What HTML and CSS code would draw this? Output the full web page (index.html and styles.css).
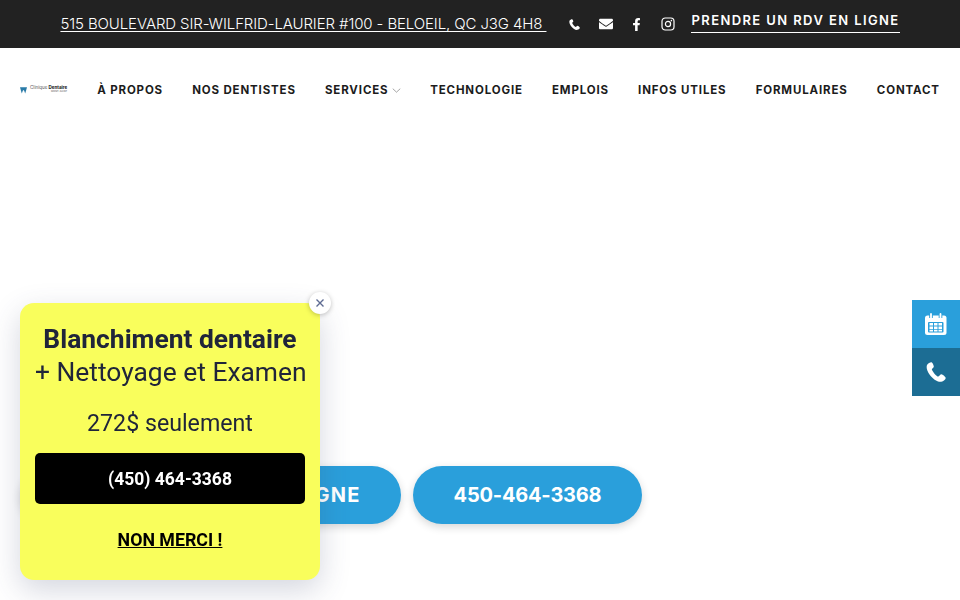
FILE: index.html
```html
<!doctype html>
<html>
    <head>
        <meta charset="utf-8">
        <title>Clinique Dentaire</title>
        <link rel="stylesheet" href="styles.css">
    </head>
    <body>
        <div class="topbar">
            <a class="address" href="#">515 BOULEVARD SIR-WILFRID-LAURIER #100 - BELOEIL, QC J3G 4H8&nbsp;</a>
            <div class="social">
                <a href="#"><svg class="icon-phone" viewBox="0 0 512 512"><path d="M150 10 C120 -5 60 30 30 70 C0 120 20 220 90 320 C170 430 290 520 390 505 C450 495 500 450 505 410 C505 385 430 320 395 315 C365 312 345 370 315 372 C270 370 170 250 150 190 C145 165 195 150 200 120 C200 90 175 25 150 10z"/></svg></a>
                <a href="#"><svg class="icon-mail" viewBox="0 0 512 512"><path d="M502.3 190.8c3.9-3.1 9.7-.2 9.7 4.7V400c0 26.5-21.5 48-48 48H48c-26.5 0-48-21.5-48-48V195.6c0-5 5.7-7.8 9.7-4.7 22.4 17.4 52.1 39.5 154.1 113.6 21.1 15.4 56.7 47.8 92.2 47.6 35.7.3 72-32.8 92.3-47.6 102-74.1 131.6-96.3 154-113.7zM256 320c23.2.4 56.6-29.2 73.4-41.4 132.7-96.3 142.8-104.7 173.4-128.7 5.8-4.5 9.2-11.5 9.2-18.9v-19c0-26.5-21.5-48-48-48H48C21.5 64 0 85.5 0 112v19c0 7.4 3.4 14.3 9.2 18.9 30.6 23.9 40.7 32.4 173.4 128.7 16.8 12.2 50.2 41.8 73.4 41.4z"/></svg></a>
                <a href="#"><svg class="icon-fb" viewBox="0 0 320 512"><path d="M279.14 288l14.22-92.66h-88.91v-60.13c0-25.35 12.42-50.06 52.24-50.06h40.42V6.26S260.43 0 225.36 0c-73.22 0-121.08 44.38-121.08 124.72v70.62H22.89V288h81.39v224h100.17V288z"/></svg></a>
                <a href="#"><svg class="icon-insta" viewBox="0 0 14 14"><rect x="1" y="1" width="12" height="12" rx="3.2" fill="none" stroke="#fff" stroke-width="1.2"/><circle cx="7" cy="7" r="2.6" fill="none" stroke="#fff" stroke-width="1.2"/><circle cx="10.4" cy="3.6" r=".8" fill="#fff"/></svg></a>
            </div>
            <a class="rdv-link" href="#">PRENDRE UN RDV EN LIGNE</a>
        </div>

        <nav class="nav">
            <a class="logo" href="#">
                <svg class="logo-tooth" viewBox="0 0 10 10"><path d="M0 1h10L8.6 6 7.4 10 6 6 5 5 4 6 2.6 10 1.4 6z"/></svg>
                <span class="logo-text">Clinique <b>Dentaire</b><small>MONT-SAINT</small></span>
            </a>
            <a class="nav-item" href="#">À PROPOS</a>
            <a class="nav-item" href="#">NOS DENTISTES</a>
            <a class="nav-item" href="#">SERVICES <svg class="chevron" viewBox="0 0 10 6"><path d="M.5 .8 5 5 9.5 .8" fill="none" stroke="#777" stroke-width=".8"/></svg></a>
            <a class="nav-item" href="#">TECHNOLOGIE</a>
            <a class="nav-item" href="#">EMPLOIS</a>
            <a class="nav-item" href="#">INFOS UTILES</a>
            <a class="nav-item" href="#">FORMULAIRES</a>
            <a class="nav-item" href="#">CONTACT</a>
        </nav>

        <section class="hero">
            <a class="pill pill-wide" href="#">PRENDRE UN RDV EN LIGNE</a>
            <a class="pill pill-phone" href="#">450-464-3368</a>
        </section>

        <div class="side-tabs">
            <a class="tab tab-calendar" href="#">
                <svg class="icon-calendar" viewBox="0 0 22 22">
                    <rect x="0" y="2.500" width="21.500" height="19.500" rx="2.500" fill="#fff"/>
                    <rect x="3" y="9" width="15.500" height="10.500" rx="1" fill="#2a9fdb"/>
                    <path fill="none" stroke="#2a9fdb" stroke-width="3.600" d="M6 .5v4.500M15.500 .5v4.500"/>
                    <path fill="none" stroke="#fff" stroke-width="1.800" stroke-linecap="round" d="M6 1v4M15.500 1v4"/>
                    <path fill="#fff" d="M4.500 10h3.500v2.500H4.500zM9 10h3.500v2.500H9zM13.500 10h3.500v2.500h-3.500zM4.500 13.500h3.500V16H4.500zM9 13.500h3.500V16H9zM13.500 13.500h3.500V16h-3.500zM4.500 16.800h3.500v1.700H4.500zM9 16.800h3.500v1.700H9zM13.500 16.800h3.500v1.700h-3.500z"/>
                </svg>
            </a>
            <a class="tab tab-phone" href="#">
                <svg class="icon-tab-phone" viewBox="0 0 512 512"><path d="M150 10 C120 -5 60 30 30 70 C0 120 20 220 90 320 C170 430 290 520 390 505 C450 495 500 450 505 410 C505 385 430 320 395 315 C365 312 345 370 315 372 C270 370 170 250 150 190 C145 165 195 150 200 120 C200 90 175 25 150 10z"/></svg>
            </a>
        </div>

        <div class="popup">
            <button class="popup-close">
                <svg viewBox="0 0 10 10"><path d="M1.500 1.500l7 7M8.500 1.500l-7 7" stroke="#5d6b92" stroke-width="1.400" fill="none"/></svg>
            </button>
            <h2 class="popup-title"><b>Blanchiment dentaire</b><br>+ Nettoyage et Examen</h2>
            <p class="popup-price">272$ seulement</p>
            <a class="popup-call" href="#">(450) 464-3368</a>
            <a class="popup-dismiss" href="#">NON MERCI !</a>
        </div>
    </body>
</html>
```

FILE: styles.css
```css
body {
    margin: 0;
    height: 600px;
    overflow: hidden;
    background: white;
    font-family: "Inter", "Liberation Sans", sans-serif;
}
a {
    color: inherit;
    text-decoration: none;
}

.topbar {
    display: flex;
    justify-content: center;
    align-items: center;
    height: 48px;
    background: #222222;
    color: white;
}
.address {
    margin-top: -1px;
    font-size: 15px;
    font-weight: 300;
    letter-spacing: -0.11px;
    text-decoration: underline;
    text-underline-offset: 2px;
}
.social {
    display: flex;
    align-items: center;
    margin-left: 13px;
    margin-right: 8px;
}
.social a {
    display: flex;
    justify-content: center;
    width: 31px;
}
.social svg {
    fill: white;
}
.icon-phone {
    width: 11px;
    height: 11px;
}
.icon-mail {
    width: 14px;
    height: 14px;
}
.icon-fb {
    width: 9px;
    height: 13px;
}
.icon-insta {
    width: 14px;
    height: 14px;
}
.rdv-link {
    margin-top: -3px;
    padding-bottom: 4px;
    border-bottom: 1px solid white;
    font-size: 13px;
    font-weight: 600;
    letter-spacing: 1.4px;
}

.nav {
    display: flex;
    justify-content: space-between;
    align-items: center;
    height: 84px;
    padding: 0 20px;
    color: #1c1c1c;
}
.logo {
    display: flex;
    align-items: center;
    gap: 3px;
    width: 48px;
}
.logo-tooth {
    width: 7px;
    height: 8px;
    fill: #2a7ba8;
}
.logo-text {
    font-size: 4.500px;
    line-height: 4px;
    white-space: nowrap;
    color: #555555;
}
.logo-text b {
    color: #111111;
}
.logo-text small {
    display: block;
    font-size: 2.500px;
    text-align: right;
}
.nav-item {
    font-size: 11.500px;
    font-weight: 700;
    letter-spacing: 0.85px;
    white-space: nowrap;
}
.chevron {
    width: 9px;
    height: 5px;
    margin-left: 0;
    vertical-align: 1px;
}

.hero {
    display: flex;
    gap: 12px;
    padding: 334px 20px 0;
}
.pill {
    display: flex;
    justify-content: center;
    align-items: center;
    height: 58px;
    border-radius: 29px;
    background: #2a9fdb;
    box-shadow: 0 3px 8px rgba(0, 0, 0, 0.16);
    color: white;
    font-size: 20px;
    font-weight: 700;
    letter-spacing: -0.2px;
    white-space: nowrap;
}
.pill-wide {
    width: 381px;
    letter-spacing: 1.300px;
}
.pill-phone {
    width: 229px;
}

.side-tabs {
    position: fixed;
    top: 300px;
    right: 0;
}
.tab {
    display: flex;
    justify-content: center;
    align-items: center;
    width: 48px;
    height: 48px;
}
.tab-calendar {
    background: #2a9fdb;
}
.tab-phone {
    background: #1c6d94;
}
.icon-calendar {
    width: 22px;
    height: 22px;
}
.icon-tab-phone {
    width: 20px;
    height: 20px;
    fill: white;
}

.popup {
    position: fixed;
    left: 20px;
    top: 303px;
    box-sizing: border-box;
    width: 300px;
    height: 277px;
    padding: 20px 15px 0;
    border-radius: 14px;
    background: #f9fe5c;
    box-shadow: 0 10px 30px rgba(60, 70, 110, 0.22);
    font-family: "Roboto", "Liberation Sans", sans-serif;
    color: #20253a;
    text-align: center;
}
.popup-close {
    position: absolute;
    top: -11px;
    right: -11px;
    display: flex;
    justify-content: center;
    align-items: center;
    width: 22px;
    height: 22px;
    padding: 0;
    border: none;
    border-radius: 50%;
    background: white;
    box-shadow: 0 1px 5px rgba(0, 0, 0, 0.25);
}
.popup-close svg {
    width: 10px;
    height: 10px;
}
.popup-title {
    margin: 0;
    font-size: 26.400px;
    font-weight: 400;
    line-height: 33px;
    white-space: nowrap;
}
.popup-price {
    margin: 18px 0 13px;
    font-size: 23.200px;
    line-height: 33px;
}
.popup-call {
    display: flex;
    justify-content: center;
    align-items: center;
    height: 51px;
    border-radius: 5px;
    background: black;
    color: white;
    font-size: 17.500px;
    font-weight: 700;
}
.popup-dismiss {
    display: inline-block;
    margin-top: 25px;
    color: black;
    font-size: 17.800px;
    font-weight: 700;
    text-decoration: underline;
}
```
